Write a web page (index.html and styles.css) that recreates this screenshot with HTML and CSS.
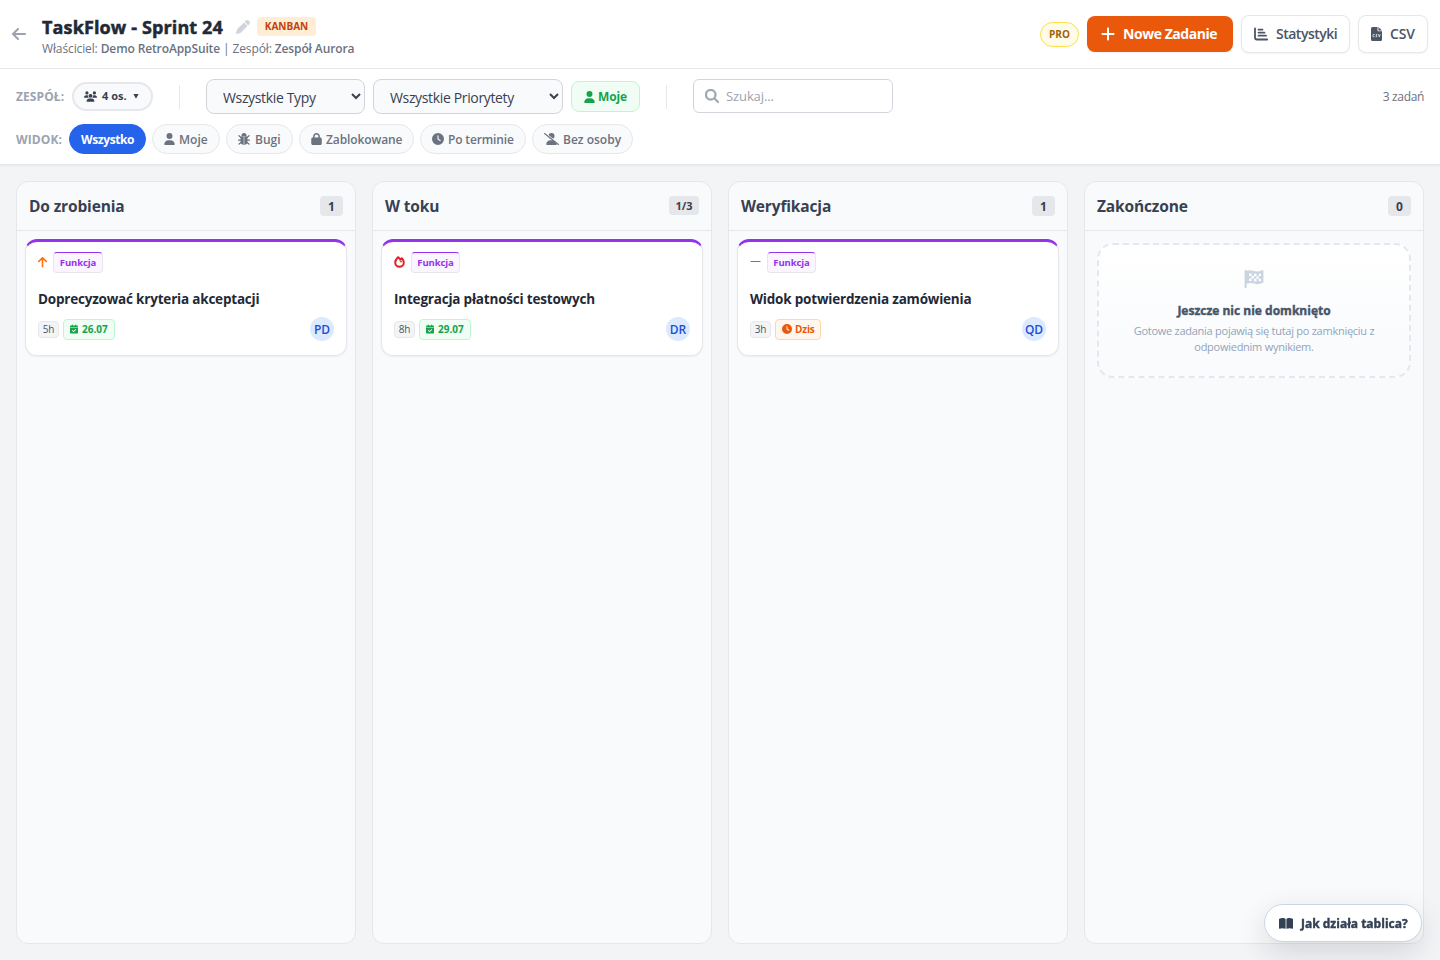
FILE: index.html
```html
<!DOCTYPE html>
<html lang="pl">
<head>
    <meta charset="UTF-8">
    <meta name="viewport" content="width=device-width, initial-scale=1.0">
    <title>TaskFlow - Sprint 24</title>
    <link rel="stylesheet" href="styles.css">
</head>
<body>
    <!-- Shared icons -->
    <svg class="sprite" aria-hidden="true">
        <symbol id="i-user" viewBox="0 0 448 512"><path d="M224 256A128 128 0 1 0 224 0a128 128 0 1 0 0 256zm-45.7 48C79.8 304 0 383.8 0 482.3C0 498.7 13.3 512 29.7 512l388.6 0c16.4 0 29.7-13.3 29.7-29.7C448 383.8 368.2 304 269.7 304l-91.4 0z"/></symbol>
        <symbol id="i-clock" viewBox="0 0 512 512"><path d="M256 0a256 256 0 1 1 0 512A256 256 0 1 1 256 0zM232 120l0 136c0 8 4 15.5 10.7 20l96 64c11 7.4 25.9 4.4 33.3-6.7s4.4-25.9-6.7-33.3L280 243.2 280 120c0-13.3-10.7-24-24-24s-24 10.7-24 24z"/></symbol>
        <symbol id="i-calendar" viewBox="0 0 448 512"><path d="M128 0c17.7 0 32 14.3 32 32l0 32 128 0 0-32c0-17.7 14.3-32 32-32s32 14.3 32 32l0 32 48 0c26.5 0 48 21.5 48 48l0 48L0 160l0-48C0 85.5 21.5 64 48 64l48 0 0-32c0-17.7 14.3-32 32-32zM0 192l448 0 0 272c0 26.5-21.5 48-48 48L48 512c-26.5 0-48-21.5-48-48L0 192zM329 305c9.4-9.4 9.4-24.6 0-33.9s-24.6-9.4-33.9 0l-95 95-47-47c-9.4-9.4-24.6-9.4-33.9 0s-9.4 24.6 0 33.9l64 64c9.4 9.4 24.6 9.4 33.9 0L329 305z"/></symbol>
    </svg>

    <header class="topbar">
        <a class="back" href="#" aria-label="Wstecz">
            <svg class="icon" width="14" height="16" viewBox="0 0 448 512"><path d="M9.4 233.4c-12.5 12.5-12.5 32.8 0 45.3l160 160c12.5 12.5 32.8 12.5 45.3 0s12.5-32.8 0-45.3L109.2 288 416 288c17.7 0 32-14.3 32-32s-14.3-32-32-32l-306.7 0L214.6 118.6c12.5-12.5 12.5-32.8 0-45.3s-32.8-12.5-45.3 0l-160 160z"/></svg>
        </a>
        <div class="board-info">
            <div class="title-row">
                <h1>TaskFlow - Sprint 24</h1>
                <svg class="icon edit" width="14" height="14" viewBox="0 0 512 512"><path d="M362.7 19.3L314.3 67.7 444.3 197.7l48.4-48.4c25-25 25-65.5 0-90.5L453.3 19.3c-25-25-65.5-25-90.5 0zm-71 71L58.6 323.5c-10.4 10.4-18 23.3-22.2 37.4L1 481.2C-1.5 489.7 .8 498.8 7 505s15.3 8.5 23.7 6.1l120.3-35.4c14.1-4.2 27-11.8 37.4-22.2L421.7 220.3 291.7 90.3z"/></svg>
                <span class="mode">KANBAN</span>
            </div>
            <p class="owner">Właściciel: <b>Demo RetroAppSuite</b> | Zespół: <b>Zespół Aurora</b></p>
        </div>
        <div class="actions">
            <span class="pro">PRO</span>
            <button class="btn btn-primary">
                <svg class="icon" width="14" height="16" viewBox="0 0 448 512"><path d="M256 80c0-17.7-14.3-32-32-32s-32 14.3-32 32l0 144L48 224c-17.7 0-32 14.3-32 32s14.3 32 32 32l144 0 0 144c0 17.7 14.3 32 32 32s32-14.3 32-32l0-144 144 0c17.7 0 32-14.3 32-32s-14.3-32-32-32l-144 0 0-144z"/></svg>
                <span>Nowe Zadanie</span>
            </button>
            <button class="btn btn-stats">
                <svg class="icon" width="14" height="14" viewBox="0 0 14 14"><path class="chart" d="M1 1.500V10.500Q1 12.500 3 12.500H13.200M4.500 2.600H8.500M4.500 5.600H10.500M4.500 8.700H12"/></svg>
                <span>Statystyki</span>
            </button>
            <button class="btn btn-csv">
                <svg class="icon" width="11" height="14" viewBox="0 0 11 14"><path d="M1.700 0H6.500V3.400Q6.500 4.200 7.300 4.200H11V12.500Q11 14 9.500 14H1.500Q0 14 0 12.500V1.500Q0 0 1.700 0ZM7.400 0L11 3.400H7.400Z"/><path class="mark" d="M3.600 7.500H2.500Q1.900 7.500 1.900 8.200V9Q1.900 9.700 2.500 9.700H3.600M6.300 7.500H5.200Q4.700 8.200 5.400 8.600Q6.300 9 5.800 9.700H4.700M7.400 7.300L8.300 9.800L9.200 7.300"/></svg>
                <span>CSV</span>
            </button>
        </div>
    </header>

    <section class="filters">
        <div class="filter-row">
            <span class="label">ZESPÓŁ:</span>
            <button class="team">
                <svg class="icon" width="13" height="11" viewBox="0 0 640 512"><path d="M144 0a80 80 0 1 1 0 160A80 80 0 1 1 144 0zM512 0a80 80 0 1 1 0 160A80 80 0 1 1 512 0zM0 298.7C0 239.8 47.8 192 106.7 192l42.7 0c15.9 0 31 3.5 44.6 9.7c-1.3 7.2-1.9 14.7-1.9 22.3c0 38.2 16.8 72.5 43.3 96c-.2 0-.4 0-.7 0L21.3 320C9.6 320 0 310.4 0 298.7zM405.3 320c-.2 0-.4 0-.7 0c26.6-23.5 43.3-57.8 43.3-96c0-7.6-.7-15-1.9-22.3c13.6-6.3 28.7-9.7 44.6-9.7l42.7 0C592.2 192 640 239.8 640 298.7c0 11.8-9.6 21.3-21.3 21.3l-213.3 0zM224 224a96 96 0 1 1 192 0 96 96 0 1 1 -192 0zM128 485.3C128 411.7 187.7 352 261.3 352l117.3 0C452.3 352 512 411.7 512 485.3c0 14.7-11.9 26.7-26.7 26.7l-330.7 0c-14.7 0-26.7-11.9-26.7-26.7z"/></svg>
                <span>4 os.</span>
                <svg class="icon caret" width="6" height="5" viewBox="0 0 6 5"><path d="M.4 0H5.600L3 4.800Z"/></svg>
            </button>
            <span class="divider"></span>
            <select class="select-type"><option>Wszystkie Typy</option></select>
            <select class="select-priority"><option>Wszystkie Priorytety</option></select>
            <button class="mine"><svg class="icon" width="11" height="12"><use href="#i-user"/></svg><span>Moje</span></button>
            <span class="divider"></span>
            <label class="search">
                <svg class="icon" width="14" height="14" viewBox="0 0 512 512"><path class="lens" d="M416 208c0 45.9-14.9 88.3-40 122.7L502.6 457.4c12.5 12.5 12.5 32.8 0 45.3s-32.8 12.5-45.3 0L330.7 376c-34.4 25.2-76.8 40-122.7 40C93.1 416 0 322.9 0 208S93.1 0 208 0S416 93.1 416 208zM208 352a144 144 0 1 0 0-288 144 144 0 1 0 0 288z"/></svg>
                <input type="text" placeholder="Szukaj...">
            </label>
            <span class="total">3 zadań</span>
        </div>
        <div class="view-row">
            <span class="label">WIDOK:</span>
            <button class="pill pill-all active"><span>Wszystko</span></button>
            <button class="pill pill-mine"><svg class="icon" width="11" height="12"><use href="#i-user"/></svg><span>Moje</span></button>
            <button class="pill pill-bugs">
                <svg class="icon" width="12" height="12" viewBox="0 0 12 12"><path d="M3.500 2.600a2.500 2.500 0 0 1 5 0V3.200H3.500ZM3 3.600H5.700V12Q2.600 11.500 2.600 8.500V4.500ZM6.300 3.600H9L9.400 4.500V8.500Q9.400 11.500 6.300 12Z"/><path class="line" d="M1 2.700L3.300 4.700M11 2.700L8.700 4.700M.6 7.100H3M11.400 7.100H9M1.100 11L3.300 9.200M10.900 11L8.700 9.200"/></svg>
                <span>Bugi</span>
            </button>
            <button class="pill pill-locked">
                <svg class="icon" width="11" height="12" viewBox="0 0 448 512"><path d="M144 144l0 48 160 0 0-48c0-44.2-35.8-80-80-80s-80 35.8-80 80zM80 192l0-48C80 64.5 144.5 0 224 0s144 64.5 144 144l0 48 16 0c35.3 0 64 28.7 64 64l0 192c0 35.3-28.7 64-64 64L64 512c-35.3 0-64-28.7-64-64L0 256c0-35.3 28.7-64 64-64l16 0z"/></svg>
                <span>Zablokowane</span>
            </button>
            <button class="pill pill-late"><svg class="icon" width="12" height="12"><use href="#i-clock"/></svg><span>Po terminie</span></button>
            <button class="pill pill-nobody">
                <svg class="icon" width="15" height="12" viewBox="0 0 640 512"><path d="M320 256a128 128 0 1 0 0-256a128 128 0 1 0 0 256zM274 304C176 304 96 384 96 482c0 17 13 30 30 30h388c17 0 30-13 30-30C544 384 464 304 366 304z"/><path class="cut" d="M10 -18L646 482"/><path class="slash" d="M24 24L616 488"/></svg>
                <span>Bez osoby</span>
            </button>
        </div>
    </section>

    <main class="board">
        <section class="column">
            <div class="column-head"><h2>Do zrobienia</h2><span class="count">1</span></div>
            <article class="card">
                <div class="card-tags">
                    <svg class="icon up" width="9" height="12" viewBox="0 0 9 12"><path class="arrow" d="M4.500 10.700V1.800M.8 5.400L4.500 1.700L8.200 5.400"/></svg>
                    <span class="type">Funkcja</span>
                </div>
                <h3>Doprecyzować kryteria akceptacji</h3>
                <div class="card-foot">
                    <span class="hours">5h</span>
                    <span class="due"><svg class="icon" width="8" height="10"><use href="#i-calendar"/></svg><span>26.07</span></span>
                    <span class="avatar">PD</span>
                </div>
            </article>
        </section>

        <section class="column">
            <div class="column-head"><h2>W toku</h2><span class="count limit">1/3</span></div>
            <article class="card">
                <div class="card-tags">
                    <svg class="icon fire" width="11" height="12" viewBox="0 0 11 12"><path class="flame" d="M4 1.200Q1.200 4 1.200 6.500A4.300 4.300 0 0 0 9.800 6.500Q9.700 4.200 7.800 2.200L6.500 3.700Q5.300 2 4 1.200Z"/><path d="M5.500 4L6.700 5.400L7.600 4.600L8 6.200L6 6.300Z"/></svg>
                    <span class="type">Funkcja</span>
                </div>
                <h3>Integracja płatności testowych</h3>
                <div class="card-foot">
                    <span class="hours">8h</span>
                    <span class="due"><svg class="icon" width="8" height="10"><use href="#i-calendar"/></svg><span>29.07</span></span>
                    <span class="avatar">DR</span>
                </div>
            </article>
        </section>

        <section class="column">
            <div class="column-head"><h2>Weryfikacja</h2><span class="count">1</span></div>
            <article class="card">
                <div class="card-tags">
                    <svg class="icon medium" width="11" height="11" viewBox="0 0 11 11"><path d="M.5 5H10.500V6H.5Z"/></svg>
                    <span class="type">Funkcja</span>
                </div>
                <h3>Widok potwierdzenia zamówienia</h3>
                <div class="card-foot">
                    <span class="hours">3h</span>
                    <span class="due today"><svg class="icon" width="10" height="10"><use href="#i-clock"/></svg><span>Dzis</span></span>
                    <span class="avatar">QD</span>
                </div>
            </article>
        </section>

        <section class="column">
            <div class="column-head"><h2>Zakończone</h2><span class="count">0</span></div>
            <div class="empty">
                <svg class="icon flag" width="20" height="20" viewBox="0 0 20 20"><path d="M1.600 .8Q2.700 .8 2.700 2Q6 .6 10 2Q14 3.200 18 1.200Q19.400 .6 19.400 2V13.500Q14.500 16.300 10 14.600Q6.500 13.400 2.700 14.700V18Q2.700 19.200 1.600 19.200T.6 18V2Q.6 .8 1.600 .8Z"/><path class="checks" d="M5 4.500H7.500V7H5ZM10 4.800H12.500V7.300H10ZM14.800 4.700H17V7H14.800ZM7.500 7H10V9.600H7.500ZM12.500 7.300H14.800V9.800H12.500ZM5 9.600H7.500V12H5ZM10 9.700H12.500V12.400H10ZM14.800 9.800H17V12.200H14.800Z"/></svg>
                <strong>Jeszcze nic nie domknięto</strong>
                <p>Gotowe zadania pojawią się tutaj po zamknięciu z<br>odpowiednim wynikiem.</p>
            </div>
        </section>
    </main>

    <button class="help">
        <svg class="icon" width="14" height="13" viewBox="0 0 576 512"><path d="M249.6 471.5c10.8 3.8 22.4-4.1 22.4-15.5l0-377.4c0-4.2-1.6-8.4-5-11C247.4 52 202.4 32 144 32C93.5 32 46.3 45.3 18.1 56.1C6.8 60.5 0 71.7 0 83.8L0 454.1c0 11.9 12.8 20.2 24.1 16.5C55.6 460.1 105.5 448 144 448c33.9 0 79 14 105.6 23.5zm76.8 0C353 462 398.1 448 432 448c38.5 0 88.4 12.1 119.9 22.6c11.3 3.8 24.1-4.6 24.1-16.5l0-370.3c0-12.1-6.8-23.3-18.1-27.6C529.7 45.3 482.5 32 432 32c-58.4 0-103.4 20-123 35.6c-3.3 2.6-5 6.8-5 11L304 456c0 11.4 11.7 19.3 22.4 15.5z"/></svg>
        <span>Jak działa tablica?</span>
    </button>
</body>
</html>
```

FILE: styles.css
```css
* {
    box-sizing: border-box;
}

body {
    display: flex;
    flex-direction: column;
    height: 960px;
    margin: 0;
    overflow: hidden;
    background: #f3f4f6;
    color: #1f2937;
    font-family: "Open Sans", "Noto Sans", sans-serif;
    font-size: 14px;
}

h1, h2, h3, p {
    margin: 0;
}

button, input, select {
    margin: 0;
    font-family: inherit;
    white-space: nowrap;
}

button {
    display: flex;
    align-items: center;
    padding: 0;
    cursor: pointer;
}

.icon {
    flex: none;
    fill: currentColor;
}

.sprite {
    display: none;
}

/* Top bar */
.topbar {
    display: flex;
    align-items: center;
    flex: none;
    height: 69px;
    padding: 0 12px;
    background: #fff;
    border-bottom: 1px solid #e5e7eb;
}

.back {
    display: flex;
    width: 30px;
    color: #9ca3af;
}

.board-info {
    padding-top: 5px;
}

.title-row {
    display: flex;
    align-items: center;
    height: 24px;
}

h1 {
    width: 181px;
    font-size: 18px;
    font-weight: 700;
    letter-spacing: 0.13px;
    line-height: 22px;
    white-space: nowrap;
    -webkit-text-stroke: 0.5px #1f2937;
}

.edit {
    margin-left: 13px;
    color: #d1d5db;
}

.mode {
    width: 59px;
    margin-left: 7px;
    background: #ffedd5;
    border-radius: 4px;
    color: #c2410c;
    font-size: 10px;
    font-weight: 700;
    line-height: 19px;
    text-align: center;
}

.owner {
    color: #6b7280;
    font-size: 12px;
    letter-spacing: -0.12px;
    line-height: 20px;
    white-space: nowrap;
}

.owner b {
    font-weight: 600;
}

.actions {
    display: flex;
    align-items: center;
    gap: 8px;
    margin-left: auto;
}

.pro {
    width: 39px;
    background: #fefce8;
    border: 1px solid #fde047;
    border-radius: 13px;
    color: #a16207;
    font-size: 10px;
    font-weight: 700;
    line-height: 23px;
    text-align: center;
}

.btn {
    height: 38px;
    background: #fff;
    border: 1px solid #e5e7eb;
    border-radius: 8px;
    box-shadow: 0 1px 2px rgba(0, 0, 0, 0.05);
    color: #4b5563;
    font-size: 14px;
    font-weight: 600;
    letter-spacing: -0.5px;
}

.btn span {
    margin-top: -1px;
}

.btn-primary {
    gap: 8px;
    width: 146px;
    height: 36px;
    padding-left: 14px;
    background: #ea580c;
    border: none;
    color: #fff;
    font-weight: 700;
    letter-spacing: -0.45px;
}

.btn-stats {
    gap: 8px;
    width: 109px;
    padding-left: 12px;
}

.btn-csv {
    gap: 8px;
    width: 70px;
    padding-left: 12px;
    letter-spacing: -0.2px;
}

.chart {
    fill: none;
    stroke: currentColor;
    stroke-linecap: round;
    stroke-width: 1.8;
}

.mark {
    fill: none;
    stroke: #fff;
    stroke-width: 0.8;
}

/* Filters */
.filters {
    flex: none;
    height: 96px;
    padding: 10px 16px 0;
    background: #fff;
    border-bottom: 1px solid #e5e7eb;
    box-shadow: 0 1px 2px rgba(0, 0, 0, 0.05);
}

.filter-row {
    display: flex;
    align-items: center;
    height: 35px;
}

.view-row {
    display: flex;
    align-items: center;
    gap: 6px;
    height: 30px;
    margin-top: 10px;
}

.label {
    width: 56px;
    color: #9ca3af;
    font-size: 12px;
    font-weight: 700;
    letter-spacing: 0.1px;
    white-space: nowrap;
}

.view-row .label {
    width: 47px;
}

.team {
    gap: 5px;
    width: 81px;
    height: 29px;
    padding-left: 10px;
    background: #f9fafb;
    border: 2px solid #e5e7eb;
    border-radius: 15px;
    color: #374151;
    font-size: 11px;
    font-weight: 700;
}

.team span {
    margin-top: -2px;
}

.caret {
    margin-left: 1px;
}

.divider {
    width: 1px;
    height: 24px;
    margin: 0 26px;
    background: #e5e7eb;
}

select {
    height: 35px;
    padding: 1px 0 0 12px;
    background: #f9fafb;
    border: 1px solid #d1d5db;
    border-radius: 8px;
    color: #374151;
    font-size: 14px;
    letter-spacing: -0.35px;
}

.select-type {
    width: 159px;
}

.select-priority {
    width: 190px;
    margin-left: 8px;
}

.mine {
    gap: 3px;
    width: 69px;
    height: 31px;
    margin-left: 8px;
    padding-left: 12px;
    background: #f0fdf4;
    border: 1px solid #bbf7d0;
    border-radius: 8px;
    color: #16a34a;
    font-size: 12px;
    font-weight: 700;
    letter-spacing: -0.1px;
}

.search {
    display: flex;
    align-items: center;
    gap: 7px;
    width: 200px;
    height: 34px;
    margin-bottom: 1px;
    padding-left: 11px;
    border: 1px solid #d1d5db;
    border-radius: 6px;
    color: #9ca3af;
}

.lens {
    stroke: currentColor;
    stroke-width: 16;
}

.search input {
    width: 150px;
    padding: 0;
    border: none;
    outline: none;
    font-size: 13px;
    letter-spacing: -0.1px;
}

.search input::placeholder {
    color: #9ca3af;
}

.total {
    margin-left: auto;
    color: #6b7280;
    font-size: 12px;
    letter-spacing: -0.35px;
}

.pill {
    gap: 4px;
    height: 30px;
    padding-left: 11px;
    background: #f9fafb;
    border: 1px solid #e5e7eb;
    border-radius: 15px;
    color: #6b7280;
    font-size: 12px;
    font-weight: 600;
}

.pill.active {
    background: #2563eb;
    border-color: #2563eb;
    color: #fff;
    font-weight: 700;
}

.pill-all {
    width: 77px;
    letter-spacing: -0.4px;
}

.pill-mine {
    width: 68px;
}

.pill-bugs {
    gap: 5px;
    width: 67px;
}

.pill-locked {
    width: 115px;
    letter-spacing: -0.1px;
}

.pill-late {
    width: 106px;
    letter-spacing: -0.15px;
}

.pill-nobody {
    width: 101px;
}

.line, .cut, .slash {
    fill: none;
    stroke: currentColor;
    stroke-linecap: round;
}

.line {
    stroke-width: 1.3;
}

.slash {
    stroke-width: 48;
}

.cut {
    stroke: #f9fafb;
    stroke-width: 60;
}

/* Board */
.board {
    display: grid;
    grid-template-columns: repeat(4, 1fr);
    gap: 16px;
    flex: 1;
    padding: 16px;
}

.column {
    background: #f9fafb;
    border: 1px solid #e5e7eb;
    border-radius: 12px;
}

.column-head {
    display: flex;
    justify-content: space-between;
    height: 49px;
    padding: 14px 12px 0;
    border-bottom: 1px solid #e5e7eb;
}

h2 {
    color: #374151;
    font-size: 15.5px;
    font-weight: 700;
    letter-spacing: -0.15px;
    line-height: 21px;
}

.count {
    width: 23px;
    height: 20px;
    background: #e5e7eb;
    border-radius: 4px;
    color: #374151;
    font-size: 12px;
    font-weight: 700;
    line-height: 21px;
    text-align: center;
}

.count.limit {
    width: 30px;
    height: 19px;
    font-size: 11px;
    line-height: 19px;
}

.card {
    height: 117px;
    margin: 8px;
    padding: 10px 12px 0;
    background: #fff;
    border: 1px solid #e5e7eb;
    border-top: 3px solid #9333ea;
    border-radius: 12px;
    box-shadow: 0 1px 2px rgba(0, 0, 0, 0.06);
}

.card-tags {
    display: flex;
    align-items: center;
    gap: 6px;
    height: 21px;
}

.card-tags .icon {
    margin-bottom: 2px;
}

.up {
    color: #f97316;
}

.arrow {
    fill: none;
    stroke: currentColor;
    stroke-linecap: round;
    stroke-linejoin: round;
    stroke-width: 1.6;
}

.fire {
    color: #dc2626;
}

.flame {
    fill: none;
    stroke: currentColor;
    stroke-linejoin: round;
    stroke-width: 2;
}

.medium {
    color: #3b82f6;
}

.type {
    width: 49px;
    height: 21px;
    background: #faf5ff;
    border: 1px solid #e5e7eb;
    border-top-color: #9333ea;
    border-radius: 4px;
    color: #9333ea;
    font-size: 9.5px;
    font-weight: 700;
    letter-spacing: -0.1px;
    line-height: 20px;
    text-align: center;
}

.up + .type {
    width: 50px;
}

h3 {
    margin-top: 16px;
    color: #1f2937;
    font-size: 13.5px;
    font-weight: 700;
    letter-spacing: -0.2px;
    line-height: 20px;
    white-space: nowrap;
}

.card-foot {
    display: flex;
    align-items: center;
    gap: 4px;
    height: 24px;
    margin-top: 8px;
}

.hours {
    width: 21px;
    background: #f3f4f6;
    border: 1px solid #e5e7eb;
    border-radius: 4px;
    color: #4b5563;
    font-size: 10px;
    letter-spacing: -0.3px;
    line-height: 15px;
    text-align: center;
}

.due {
    display: flex;
    align-items: center;
    gap: 4px;
    width: 52px;
    height: 21px;
    padding-left: 6px;
    background: #f0fdf4;
    border: 1px solid #bbf7d0;
    border-radius: 4px;
    color: #16a34a;
    font-size: 10px;
    font-weight: 700;
}

.due.today {
    gap: 3px;
    width: 46px;
    background: #fff7ed;
    border-color: #fed7aa;
    color: #ea580c;
    letter-spacing: -0.2px;
}

.avatar {
    width: 24px;
    height: 24px;
    margin-left: auto;
    background: #dbeafe;
    border-radius: 50%;
    color: #1d4ed8;
    font-size: 12px;
    font-weight: 600;
    line-height: 25px;
    text-align: center;
}

.empty {
    display: flex;
    flex-direction: column;
    align-items: center;
    height: 135px;
    margin: 12px;
    padding-top: 24px;
    background: linear-gradient(#fff, #f8fafc);
    border: 2px dashed #e2e8f0;
    border-radius: 16px;
    color: #94a3b8;
    white-space: nowrap;
}

.flag {
    color: #cbd5e1;
}

.checks {
    fill: #fff;
}

.empty strong {
    margin-top: 12px;
    color: #475569;
    font-size: 12px;
    font-weight: 700;
    line-height: 20px;
    -webkit-text-stroke: 0.4px #475569;
}

.empty p {
    margin-top: 2px;
    font-size: 11px;
    letter-spacing: -0.26px;
    line-height: 16px;
    text-align: center;
}

/* Floating over the board */
.help {
    position: fixed;
    right: 18px;
    bottom: 18px;
    gap: 8px;
    width: 158px;
    height: 38px;
    padding-left: 14px;
    background: #fff;
    border: 1px solid #cbd5e1;
    border-radius: 19px;
    box-shadow: 0 10px 30px rgba(15, 23, 42, 0.14);
    color: #334155;
    font-size: 12px;
    font-weight: 700;
    -webkit-text-stroke: 0.4px #334155;
}
```
